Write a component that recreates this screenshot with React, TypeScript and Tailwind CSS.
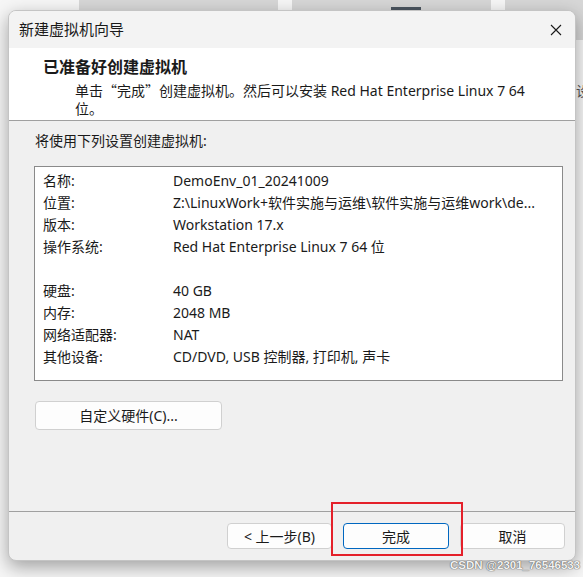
import React from 'react';

const rows: [string, string][] = [
  ['名称:', 'DemoEnv_01_20241009'],
  ['位置:', 'Z:\\LinuxWork+软件实施与运维\\软件实施与运维work\\de...'],
  ['版本:', 'Workstation 17.x'],
  ['操作系统:', 'Red Hat Enterprise Linux 7 64 位'],
  ['', ''],
  ['硬盘:', '40 GB'],
  ['内存:', '2048 MB'],
  ['网络适配器:', 'NAT'],
  ['其他设备:', 'CD/DVD, USB 控制器, 打印机, 声卡'],
];

const font = "font-['Noto_Sans','Noto_Sans_CJK_SC',sans-serif]";

const App: React.FC = () => {
  return (
    <div className={`relative w-[583px] h-[577px] overflow-hidden bg-[#f6f6f6] text-[#1a1a1a] ${font}`}>
      {/* windows behind the dialog */}
      <div className="absolute top-0 left-[79px] w-[199px] h-[40px] bg-[#d7d7d7]"></div>
      <div className="absolute top-0 left-[292px] w-[199px] h-[40px] bg-[#d7d7d7]"></div>
      <div className="absolute top-[7px] left-[391px] w-[30px] h-[6px] bg-[#4b5560]"></div>
      <div className="absolute top-0 left-[505px] w-[80px] h-[40px] bg-[#d7d7d7]"></div>
      <span className="absolute top-[80px] left-[576px] text-[14px] text-[#555]">设</span>

      <div className="relative ml-[8px] mt-[10px] w-[568px] h-[551px] flex flex-col rounded-lg border border-[#c4c4c4] bg-[#f0f0f0] shadow-[0_6px_18px_rgba(0,0,0,0.35)] overflow-hidden">
        {/* title bar */}
        <div className="h-[37px] flex items-center justify-between bg-[#f3f3f3] pl-[10px] pr-[13px]">
          <span className="text-[15px] leading-[20px] -mt-[2px]">新建虚拟机向导</span>
          <svg width="12" height="12" viewBox="0 0 12 12" className="text-[#1a1a1a]">
            <path d="M1 1 L11 11 M11 1 L1 11" stroke="currentColor" strokeWidth="1.1" fill="none" />
          </svg>
        </div>

        {/* header */}
        <div className="h-[73px] bg-white border-b border-[#a0a0a0] pt-[9px]">
          <div className="pl-[34px] text-[16px] leading-[20px] font-bold">已准备好创建虚拟机</div>
          <div className="pl-[66px] mt-[4px] text-[14px] leading-[18px]">
            单击<span className="font-['Noto_Sans_CJK_SC']">“完成”</span>创建虚拟机。然后可以安装 Red Hat Enterprise Linux 7 64
            <br />
            位。
          </div>
        </div>

        {/* body */}
        <div className="flex-1 pt-[10px] pl-[25px]">
          <div className="text-[14px] leading-[20px] pl-[1px]">将使用下列设置创建虚拟机:</div>
          <div className="mt-[15px] w-[529px] h-[215px] bg-white border border-[#8a8a8a] pt-[2px] pl-[8px]">
            {rows.map(([k, v], i) => (
              <div key={i} className="flex h-[22px] items-center text-[14px] whitespace-nowrap">
                <span className="w-[130px]">{k}</span>
                <span>{v}</span>
              </div>
            ))}
          </div>
          <button className="mt-[20px] ml-[1px] w-[187px] h-[29px] rounded-[4px] border border-[#d0d0d0] bg-[#fdfdfd] text-[14px]">
            自定义硬件(C)...
          </button>
        </div>

        {/* footer */}
        <div className="h-[49px] border-t border-[#a0a0a0] flex justify-end gap-[11px] pt-[11px] pr-[10px]">
          <button className="w-[105px] h-[26px] rounded-[4px] border border-[#d0d0d0] bg-[#fdfdfd] text-[14px]">&lt; 上一步(B)</button>
          <button className="w-[106px] h-[26px] rounded-[4px] border border-[#0067c0] bg-[#fdfdfd] text-[14px]">完成</button>
          <button className="w-[105px] h-[26px] rounded-[4px] border border-[#d0d0d0] bg-[#fdfdfd] text-[14px]">取消</button>
        </div>
      </div>

      {/* annotation */}
      <div className="absolute left-[331px] top-[502px] w-[132px] h-[54px] border-2 border-[#e4202a]"></div>
      <span className="absolute left-[450px] top-[558px] whitespace-nowrap text-[11.5px] leading-[14px] font-bold font-['Liberation_Sans',sans-serif] text-[#f2f2f2] [text-shadow:0_0_1px_#555,0_0_1px_#555]">
        CSDN @2301_76546533
      </span>
    </div>
  );
};

export default App;
